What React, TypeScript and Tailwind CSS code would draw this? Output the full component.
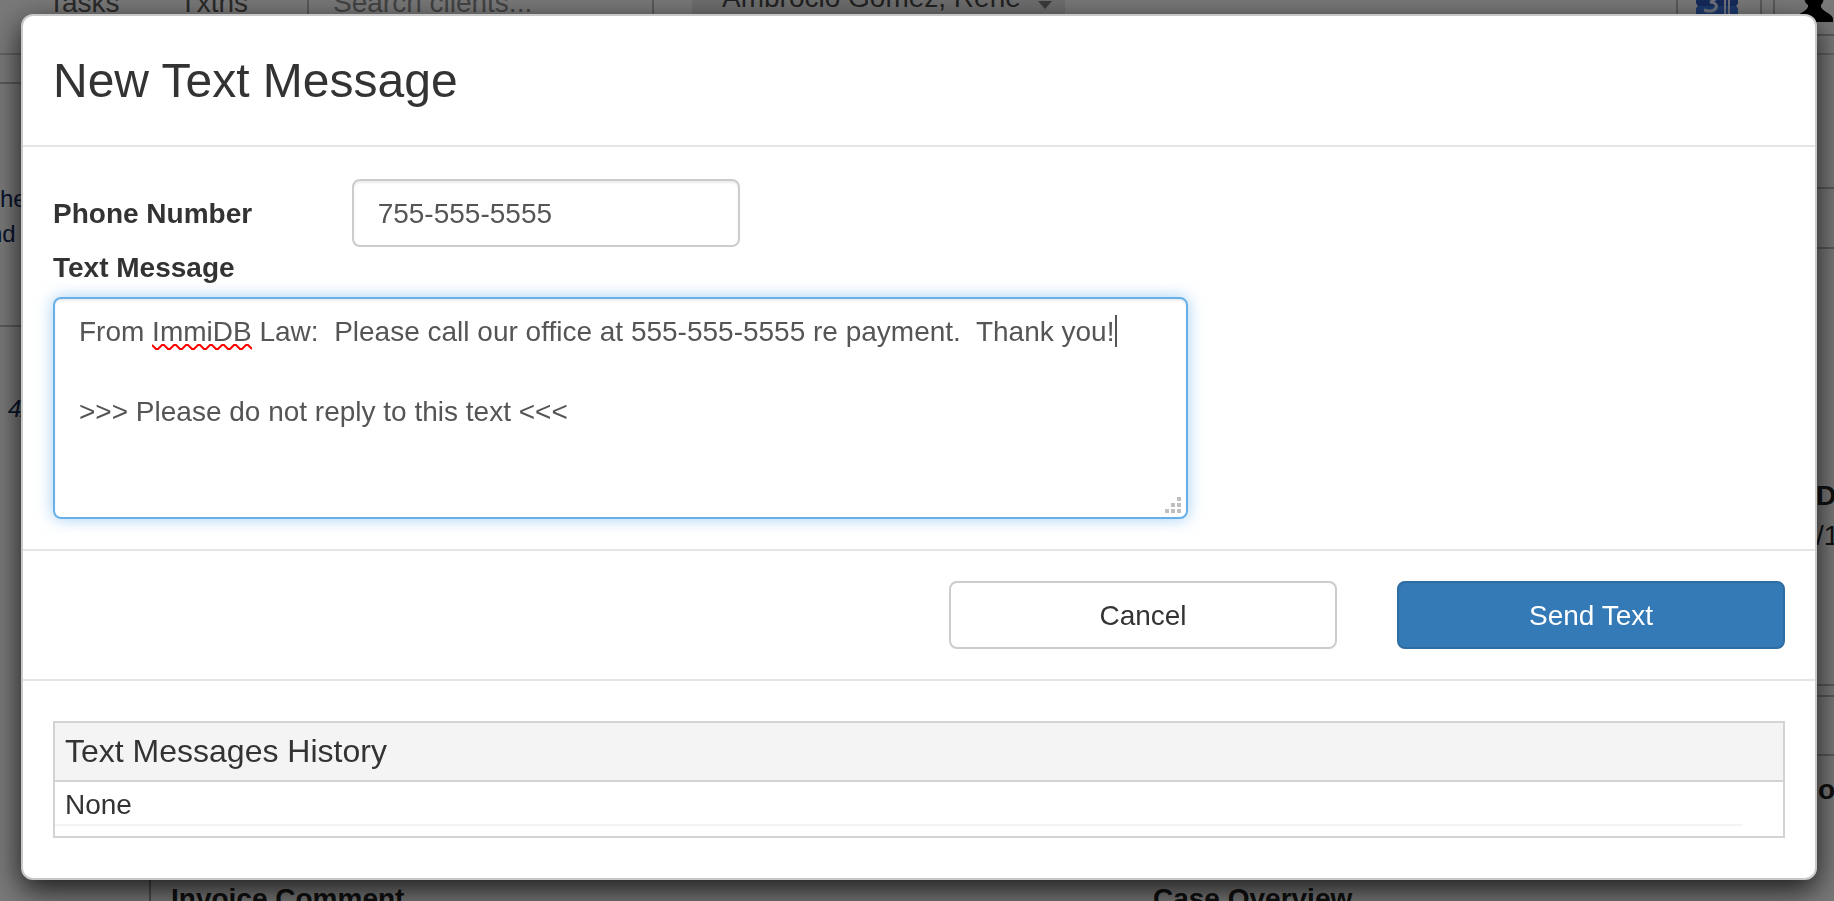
import { useState } from "react";

const initialMessage =
  "From ImmiDB Law:  Please call our office at 555-555-5555 re payment.  Thank you!\n\n>>> Please do not reply to this text <<<";

function CalendarIcon() {
  return (
    <svg width="44" height="28" viewBox="0 0 44 28" aria-hidden="true">
      <path d="M1 0H43V17L41 20L43 22V28H1V22L3 20L1 17Z" fill="#3a74dc" />
      <path d="M1 0H43V17L41 20H3L1 17Z" fill="#2c55b4" />
      <path
        d="M10 8Q17 3 20 9Q22 15 15 16Q23 17 21 22Q18 27 9 24"
        fill="none"
        stroke="#dfe8fa"
        strokeWidth="3"
      />
      <path d="M25 12L30 8V28M34 6V28" fill="none" stroke="#dfe8fa" strokeWidth="2" />
    </svg>
  );
}

function PersonIcon() {
  return (
    <svg width="38" height="40" viewBox="0 0 38 40" aria-hidden="true">
      <path
        d="M8 12C8 4 12 0 18 0S28 4 28 12C28 18 27 21 25 23V25C27 30 37 32 37 37V40H0V37C0 32 10 30 12 25V23C9 21 8 18 8 12Z"
        fill="#000"
      />
    </svg>
  );
}

function CasePage() {
  return (
    <div aria-hidden="true" className="flex h-screen flex-col overflow-hidden bg-[#f3f3f3]">
      <header className="flex h-[55px] shrink-0 items-start border-b-2 border-[#c4c4c4] text-[28px] leading-8 text-[#555]">
        <nav className="flex w-[307px] shrink-0 gap-[60px] pl-[48px]">
          <span className="-mt-[13px]">Tasks</span>
          <span className="-mt-[13px]">Txtns</span>
        </nav>
        <div className="h-[34px] w-[347px] shrink-0 border-x-2 border-[#b4b4b4] pl-6 text-[#888]">
          <div className="-mt-[13px]">Search clients...</div>
        </div>
        <div className="ml-[38px] flex h-[34px] shrink-0 bg-[#ddd] pl-[30px] text-[#444]">
          <div className="-mt-[18px]">Ambrocio Gomez, Rene</div>
          <svg width="44" height="12" viewBox="0 0 44 12">
            <path d="M17 1H31L24 9Z" fill="#777" />
          </svg>
        </div>
        <div className="-mt-[14px] ml-auto flex h-[50px] w-[86px] shrink-0 border-x-2 border-b-2 border-[#b4b4b4] pl-[17px]">
          <CalendarIcon />
        </div>
        <div className="-mt-[18px] ml-[11px] flex h-[54px] w-[61px] shrink-0 justify-end border-b-2 border-l-2 border-[#b4b4b4]">
          <PersonIcon />
        </div>
      </header>
      <div className="flex grow justify-between">
        <div className="w-[150px] shrink-0 text-[24px] leading-[35px] text-[#14285a]">
          <div className="h-[29px] border-b-2 border-[#b4b4b4]" />
          <div className="h-[243px] border-b-2 border-[#b4b4b4] pt-[97px]">
            <div>he</div>
            <div className="-ml-[11px]">nd</div>
          </div>
          <div className="pt-16 pl-2 italic">4/7</div>
        </div>
        <div className="w-[18px] shrink-0 text-[28px] leading-10 whitespace-nowrap text-[#222]">
          <div className="h-[134px] border-b-2 border-[#b4b4b4]" />
          <div className="h-[60px] border-b-2 border-[#b4b4b4]" />
          <div className="h-[437px] border-b-2 border-[#b4b4b4] pt-[227px]">
            <div className="font-bold">D</div>
            <div>/1</div>
          </div>
          <div className="h-[11px] border-b-2 border-[#b4b4b4]" />
          <div className="h-[59px] border-b-2 border-[#b4b4b4]" />
          <div className="pt-[14px] pl-[2px] font-bold">o</div>
        </div>
      </div>
      <div className="ml-[149px] flex h-[21px] shrink-0 border-l-2 border-[#999] pl-5 text-[28px] leading-10 font-bold text-[#222]">
        <div className="-mt-[1px] w-[982px]">Invoice Comment</div>
        <div className="-mt-[1px]">Case Overview</div>
      </div>
    </div>
  );
}

export default function App() {
  const [phone, setPhone] = useState("755-555-5555");
  const [message, setMessage] = useState(initialMessage);

  return (
    <div className="font-['Liberation_Sans',Arial,sans-serif] text-[28px] leading-10 text-[#333]">
      <CasePage />
      <div className="fixed inset-0 bg-black/50 pt-[14px] pr-[17px] pl-[21px]">
        <div
          role="dialog"
          aria-modal="true"
          aria-labelledby="dialog-title"
          className="rounded-xl border-2 border-[#c8c8c8] bg-white shadow-[0_10px_30px_rgba(0,0,0,0.8)]"
        >
          <div className="border-b-2 border-[#e5e5e5] p-[30px]">
            <h1 id="dialog-title" className="text-[48px] leading-[69px]">
              New Text Message
            </h1>
          </div>

          <form className="px-[30px] pt-8 pb-[30px]">
            <div className="grid grid-cols-12 items-center gap-x-[60px]">
              <label htmlFor="phone" className="col-span-2 pt-[2px] font-bold whitespace-nowrap">
                Phone Number
              </label>
              <input
                id="phone"
                type="text"
                value={phone}
                onChange={(e) => setPhone(e.target.value)}
                className="col-span-3 h-[68px] w-full rounded-lg border-2 border-[#ccc] px-6 pt-[2px] text-[#555] shadow-[inset_0_2px_2px_rgba(0,0,0,0.075)] outline-none"
              />
            </div>
            <label htmlFor="message" className="mb-[9px] block pt-[1px] font-bold">
              Text Message
            </label>
            <div className="grid grid-cols-12 gap-x-[60px]">
              <div className="relative col-span-8">
                <textarea
                  id="message"
                  spellCheck={false}
                  value={message}
                  onChange={(e) => setMessage(e.target.value)}
                  className="block h-[222px] w-full resize-none overflow-hidden rounded-lg border-2 border-[#66afe9] px-6 pt-[13px] pb-3 text-[#555] shadow-[inset_0_2px_2px_rgba(0,0,0,0.075),0_0_16px_rgba(102,175,233,0.6)] outline-none"
                />
                <svg
                  className="pointer-events-none absolute top-[46px] left-[99px]"
                  width="100"
                  height="8"
                  viewBox="0 0 100 8"
                  aria-hidden="true"
                >
                  <path
                    d="M0 2L4 6H6L10 2H12L16 6H18L22 2H24L28 6H30L34 2H36L40 6H42L46 2H48L52 6H54L58 2H60L64 6H66L70 2H72L76 6H78L82 2H84L88 6H90L94 2H96L100 6"
                    fill="none"
                    stroke="#f00"
                    strokeWidth="2"
                  />
                </svg>
                <span className="pointer-events-none absolute top-[18px] left-[1062px] h-8 w-[2px] bg-[#555]" />
                <svg
                  className="pointer-events-none absolute right-[7px] bottom-[6px]"
                  width="16"
                  height="16"
                  viewBox="0 0 16 16"
                  fill="#bfbfbf"
                  aria-hidden="true"
                >
                  <path d="M12 0h4v4h-4zM6 6h4v4H6zM12 6h4v4h-4zM0 12h4v4H0zM6 12h4v4H6zM12 12h4v4h-4z" />
                </svg>
              </div>
            </div>
          </form>

          <div className="grid grid-cols-12 gap-x-[60px] border-y-2 border-[#e5e5e5] p-[30px]">
            <button
              type="button"
              className="col-span-3 col-start-7 h-[68px] rounded-lg border-2 border-[#ccc] bg-white pt-[2px]"
            >
              Cancel
            </button>
            <button
              type="button"
              className="col-span-3 h-[68px] rounded-lg border-2 border-[#2e6da4] bg-[#337ab7] pt-[2px] text-white"
            >
              Send Text
            </button>
          </div>

          <div className="px-[30px] py-10">
            <section className="border-2 border-[#d3d3d3] pb-[10px]">
              <h2 className="border-b-2 border-[#d3d3d3] bg-[#f4f4f4] px-[10px] py-[6px] text-[32px] leading-[45px]">
                Text Messages History
              </h2>
              <div className="mr-10 border-b-2 border-[#f4f4f4] px-[10px] pt-1 leading-[38px]">None</div>
            </section>
          </div>
        </div>
      </div>
    </div>
  );
}
